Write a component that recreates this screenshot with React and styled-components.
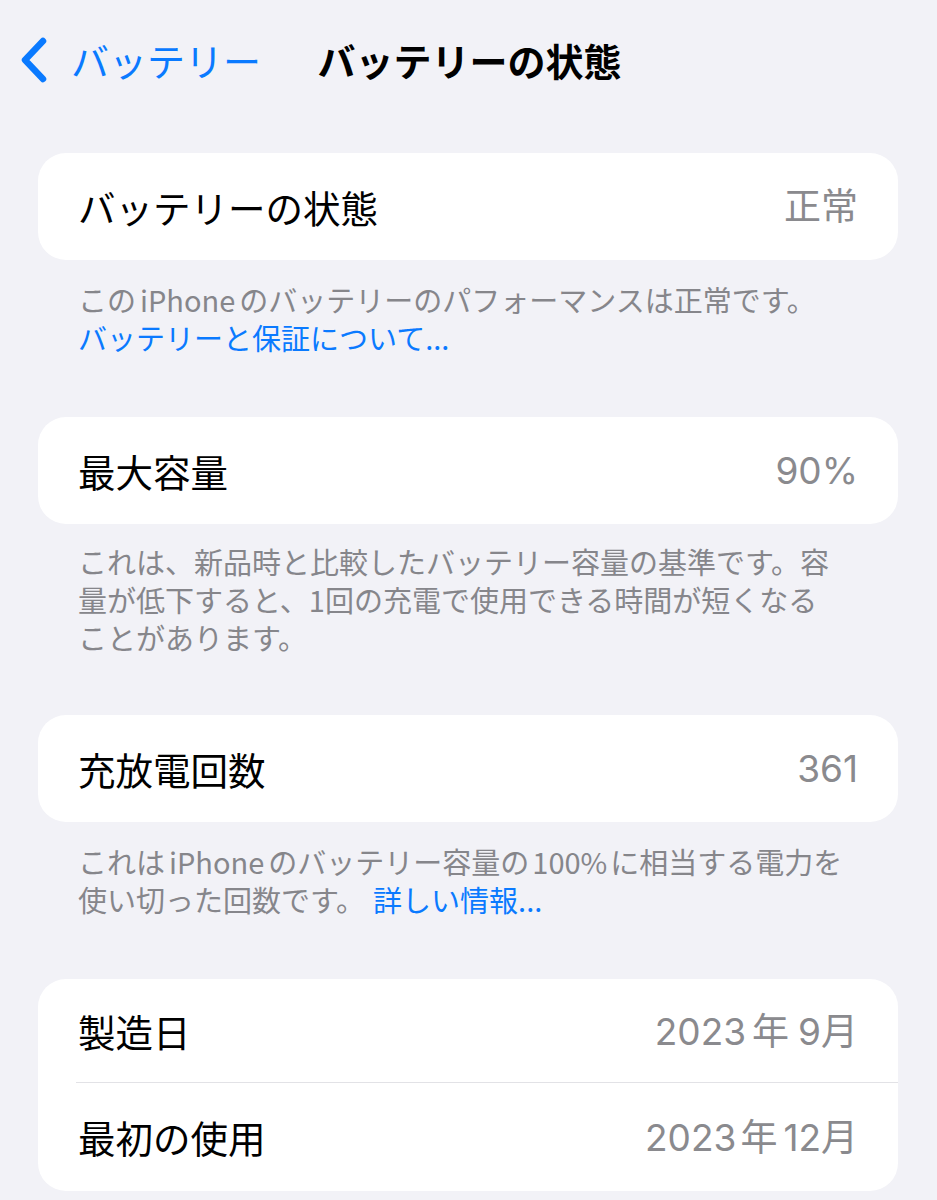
import React from "react";
import styled, { createGlobalStyle } from "styled-components";

const Global = createGlobalStyle`
  html, body { margin: 0; padding: 0; background: #f2f2f7; }
  body { font-family: "Noto Sans CJK JP", "Noto Sans", sans-serif; -webkit-font-smoothing: antialiased; }
`;

const Page = styled.div`
  width: 937px;
  min-height: 1200px;
  background: #f2f2f7;
  box-sizing: border-box;
  padding: 0 39px 0 38px;
`;

const NavBar = styled.header`
  position: relative;
  height: 120px;
  display: flex;
  align-items: flex-start;
  justify-content: center;
  margin: 0 -39px 33px -38px;
  padding-top: 34px;
  box-sizing: border-box;
`;

const BackButton = styled.button`
  position: absolute;
  left: 19px;
  top: 34px;
  display: flex;
  align-items: center;
  gap: 22px;
  border: 0;
  background: none;
  padding: 0;
  color: #0a7aff;
  font-family: inherit;
  font-size: 38px;
  line-height: 52px;
  cursor: pointer;
`;

const Title = styled.h1`
  margin: 0 0 0 2px;
  font-size: 38px;
  line-height: 52px;
  font-weight: 700;
  color: #000;
`;

const Card = styled.section`
  background: #fff;
  border-radius: 28px;
  overflow: hidden;
`;

const Row = styled.div`
  display: flex;
  align-items: center;
  justify-content: space-between;
  height: ${(p) => p.$h || 107}px;
  padding: 0 40px 0 40px;
  box-sizing: border-box;
  position: relative;
  ${(p) =>
    p.$divider &&
    `&::after {
      content: "";
      position: absolute;
      left: 38px;
      right: 0;
      bottom: 0;
      height: 1.5px;
      background: #e2e2e6;
    }`}
`;

const Label = styled.span`
  font-size: 37.5px;
  color: #000;
  line-height: 1;
`;

const Value = styled.span`
  font-family: "Inter", "Noto Sans CJK JP", sans-serif;
  font-size: 37px;
  color: #8a8a8e;
  line-height: 1;
`;

const Gap = styled.span`
  margin: 0 ${(p) => p.$r ?? 4}px 0 ${(p) => p.$l ?? 4}px;
`;

const Footer = styled.div`
  padding: ${(p) => p.$top || 20}px 40px 0 40px;
  font-size: 29px;
  line-height: 38px;
  color: #86868b;
  white-space: nowrap;
  height: ${(p) => p.$h}px;
  box-sizing: border-box;
`;

const Line = styled.div`
  height: 38px;
  line-height: 38px;
`;

const Link = styled.a`
  color: #0a7aff;
  text-decoration: none;
  margin-left: ${(p) => p.$ml || 0}px;
`;

const Chevron = () => (
  <svg width="30" height="46" viewBox="0 0 30 46" aria-hidden="true">
    <path
      d="M24 4 L6 23 L24 42"
      fill="none"
      stroke="#0a7aff"
      strokeWidth="6.5"
      strokeLinecap="round"
      strokeLinejoin="round"
    />
  </svg>
);

export default function App() {
  return (
    <>
      <Global />
      <Page>
        <NavBar>
          <BackButton>
            <Chevron />
            バッテリー
          </BackButton>
          <Title>バッテリーの状態</Title>
        </NavBar>

        <Card>
          <Row $h={107}>
            <Label>バッテリーの状態</Label>
            <Value>正常</Value>
          </Row>
        </Card>
        <Footer $h={157}>
          <Line>
            この<Gap>iPhone</Gap>のバッテリーのパフォーマンスは正常です。
          </Line>
          <Line>
            <Link href="#">バッテリーと保証について...</Link>
          </Line>
        </Footer>

        <Card>
          <Row $h={107}>
            <Label>最大容量</Label>
            <Value>90%</Value>
          </Row>
        </Card>
        <Footer $h={191} $top={18}>
          <Line>これは、新品時と比較したバッテリー容量の基準です。容</Line>
          <Line>量が低下すると、1回の充電で使用できる時間が短くなる</Line>
          <Line>ことがあります。</Line>
        </Footer>

        <Card>
          <Row $h={107}>
            <Label>充放電回数</Label>
            <Value>361</Value>
          </Row>
        </Card>
        <Footer $h={157} $top={20}>
          <Line>
            これは<Gap>iPhone</Gap>のバッテリー容量の<Gap $l={3} $r={3}>100%</Gap>に相当する電力を
          </Line>
          <Line>
            使い切った回数です。<Link href="#" $ml={8}>詳しい情報...</Link>
          </Line>
        </Footer>

        <Card>
          <Row $h={104} $divider>
            <Label>製造日</Label>
            <Value>
              2023<Gap $l={6} $r={9}>年</Gap>9月
            </Value>
          </Row>
          <Row $h={108}>
            <Label>最初の使用</Label>
            <Value>
              2023<Gap $l={4} $r={6}>年</Gap>12月
            </Value>
          </Row>
        </Card>
      </Page>
    </>
  );
}
